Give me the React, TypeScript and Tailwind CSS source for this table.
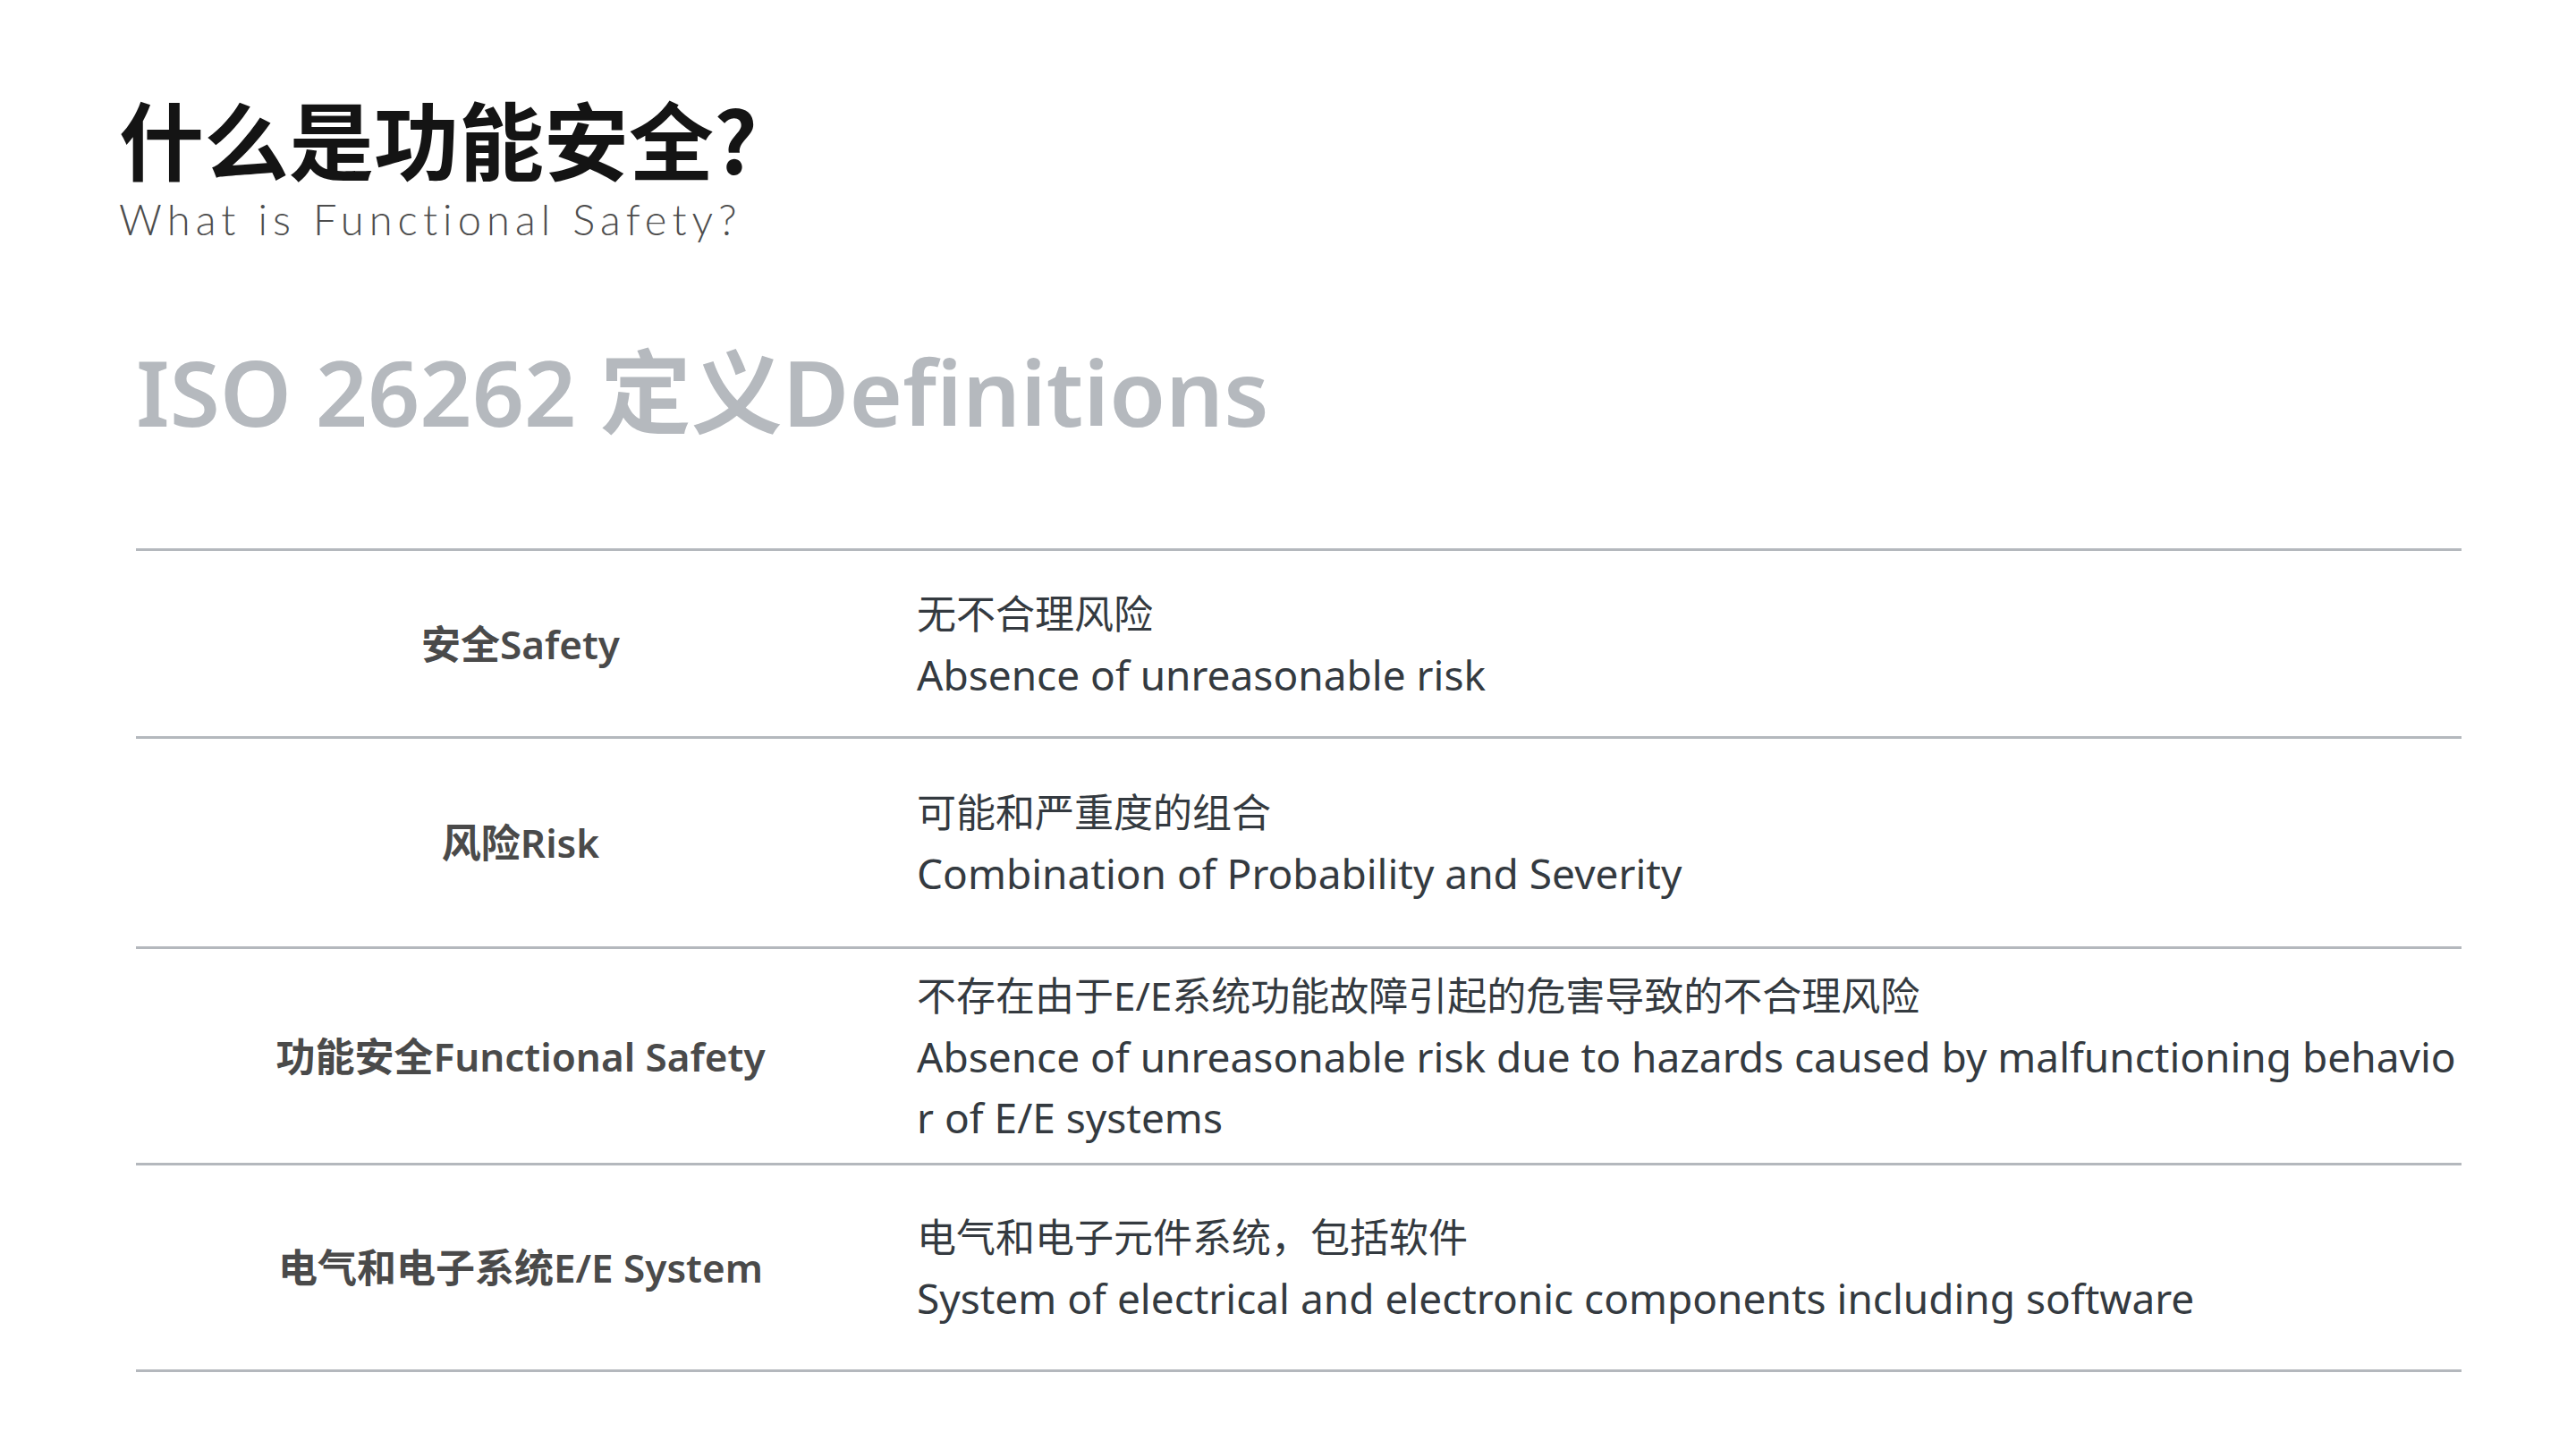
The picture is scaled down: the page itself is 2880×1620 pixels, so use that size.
import React from 'react';

type Row = {
  label: string;
  zh: string;
  en: string;
  height: string;
};

const rows: Row[] = [
  { label: '安全Safety', zh: '无不合理风险', en: 'Absence of unreasonable risk', height: 'h-[210px]' },
  { label: '风险Risk', zh: '可能和严重度的组合', en: 'Combination of Probability and Severity', height: 'h-[235px]' },
  {
    label: '功能安全Functional Safety',
    zh: '不存在由于E/E系统功能故障引起的危害导致的不合理风险',
    en: 'Absence of unreasonable risk due to hazards caused by malfunctioning behavior of E/E systems',
    height: 'h-[242px]',
  },
  {
    label: '电气和电子系统E/E System',
    zh: '电气和电子元件系统，包括软件',
    en: 'System of electrical and electronic components including software',
    height: 'h-[234px]',
  },
];

function DefinitionRow({ row, last }: { row: Row; last: boolean }) {
  return (
    <div
      className={`flex items-center border-t-[3px] border-[#b4b8bd] ${row.height} ${
        last ? 'border-b-[3px]' : ''
      }`}
    >
      <div className="w-[860px] shrink-0 text-center text-[44px] font-semibold text-[#4a4a4a] font-['Noto_Sans','Noto_Sans_CJK_SC',sans-serif]">
        {row.label}
      </div>
      <div className="flex-1 pl-[13px] leading-[68px] text-[#343a40] break-all font-['Noto_Sans','Noto_Sans_CJK_SC',sans-serif]">
        <div className="text-[44px]">{row.zh}</div>
        <div className="text-[46px]">{row.en}</div>
      </div>
    </div>
  );
}

export default function App() {
  return (
    <div className="min-h-screen w-full bg-white">
      <header className="pl-[133px] pt-[106px]">
        <h1 className="text-[95px] leading-[95px] font-bold text-[#141414] font-['Noto_Sans_CJK_SC',sans-serif]">
          什么是功能安全?
        </h1>
        <p className="mt-[21px] text-[47px] leading-[46px] font-light tracking-[0.13em] text-[#4d4d4d] font-['Lato','Noto_Sans',sans-serif]">
          What is Functional Safety?
        </p>
      </header>

      <main className="pl-[152px] pr-[128px]">
        <h2 className="mt-[119px] text-[102px] leading-[102px] font-semibold text-[#b5b9be] font-['Noto_Sans','Noto_Sans_CJK_SC',sans-serif]">
          ISO 26262 定义Definitions
        </h2>

        <section className="mt-[124px]">
          {rows.map((row, i) => (
            <DefinitionRow key={row.label} row={row} last={i === rows.length - 1} />
          ))}
        </section>
      </main>
    </div>
  );
}
